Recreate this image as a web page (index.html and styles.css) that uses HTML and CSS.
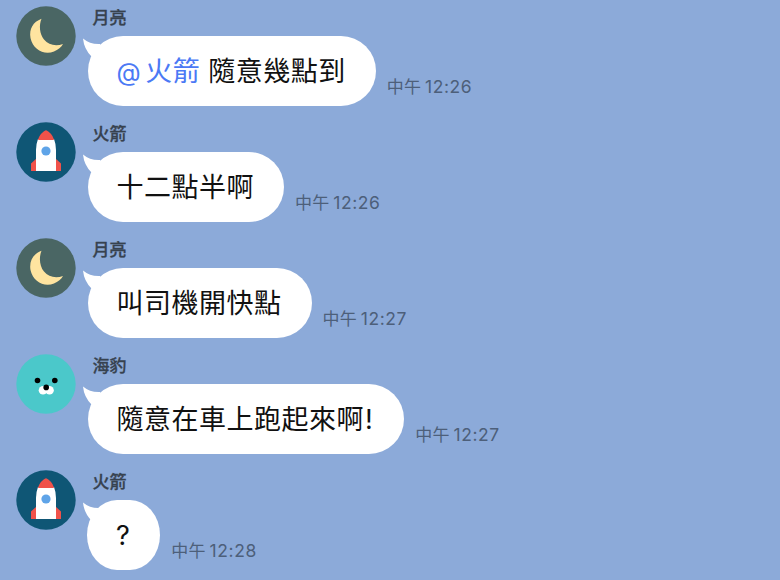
FILE: index.html
```
<!DOCTYPE html>
<html lang="zh-Hant">
<head>
    <meta charset="UTF-8">
    <meta name="viewport" content="width=device-width, initial-scale=1.0">
    <title>聊天</title>
    <link rel="stylesheet" href="styles.css">
</head>
<body>
    <svg class="defs" aria-hidden="true">
        <symbol id="moon" viewBox="0 0 60 60">
            <circle cx="30" cy="30" r="29.7" fill="#4a6664"/>
            <path d="M25.500 12.800C17 16 13 23 14.500 32C17 43.500 28 49.500 38 45.500C42 44 45.500 41 47 38C39.500 40.500 32.500 39 28 33.500C23.500 28 22.800 19.500 25.500 12.800Z" fill="#ffe4a0"/>
        </symbol>
        <symbol id="rocket" viewBox="0 0 60 60">
            <circle cx="30" cy="30" r="29.7" fill="#0f5675"/>
            <path d="M15 49V41.5L21 36H39L45 41.5V49Z" fill="#f0524a"/>
            <path d="M20 49V28Q20 22 22 17H38Q40 22 40 28V49Z" fill="#fff"/>
            <path d="M22 18C23.5 12.5 27 9.5 30 8.3C33 9.5 36.5 12.5 38 18Z" fill="#f0524a"/>
            <circle cx="30" cy="29" r="4.6" fill="#5fa4e8"/>
        </symbol>
        <symbol id="seal" viewBox="0 0 60 60">
            <circle cx="30" cy="30" r="29.7" fill="#4bc8ca"/>
            <circle cx="27" cy="36.3" r="4.3" fill="#fff"/>
            <circle cx="33.5" cy="36.3" r="4.3" fill="#fff"/>
            <circle cx="21.5" cy="26.5" r="2.8"/>
            <circle cx="38.8" cy="26.5" r="2.8"/>
            <circle cx="30.2" cy="33.4" r="2.8"/>
        </symbol>
        <symbol id="tail" viewBox="0 0 24 24">
            <path d="M1 1.5Q8 7.500 18 7L22 22L11 24L9.500 19.500Q2 12 1 1.500Z" fill="#fff"/>
        </symbol>
    </svg>

    <div class="chat">
        <div class="message">
            <svg class="avatar"><use href="#moon"/></svg>
            <div class="content">
                <div class="name">月亮</div>
                <div class="row">
                    <div class="bubble"><svg class="tail"><use href="#tail"/></svg><span class="mention"><span class="at">@</span>火箭</span> 隨意幾點到</div>
                    <div class="time">中午 <span class="clock">12:26</span></div>
                </div>
            </div>
        </div>

        <div class="message">
            <svg class="avatar"><use href="#rocket"/></svg>
            <div class="content">
                <div class="name">火箭</div>
                <div class="row">
                    <div class="bubble"><svg class="tail"><use href="#tail"/></svg>十二點半啊</div>
                    <div class="time">中午 <span class="clock">12:26</span></div>
                </div>
            </div>
        </div>

        <div class="message">
            <svg class="avatar"><use href="#moon"/></svg>
            <div class="content">
                <div class="name">月亮</div>
                <div class="row">
                    <div class="bubble"><svg class="tail"><use href="#tail"/></svg>叫司機開快點</div>
                    <div class="time">中午 <span class="clock">12:27</span></div>
                </div>
            </div>
        </div>

        <div class="message">
            <svg class="avatar"><use href="#seal"/></svg>
            <div class="content">
                <div class="name">海豹</div>
                <div class="row">
                    <div class="bubble"><svg class="tail"><use href="#tail"/></svg>隨意在車上跑起來啊<span class="mark">!</span></div>
                    <div class="time">中午 <span class="clock">12:27</span></div>
                </div>
            </div>
        </div>

        <div class="message">
            <svg class="avatar"><use href="#rocket"/></svg>
            <div class="content">
                <div class="name">火箭</div>
                <div class="row">
                    <div class="bubble short"><svg class="tail"><use href="#tail"/></svg>?</div>
                    <div class="time">中午 <span class="clock">12:28</span></div>
                </div>
            </div>
        </div>
    </div>
</body>
</html>
```

FILE: styles.css
```
body {
    margin: 0;
    background-color: #8caad9;
    font-family: Inter, "Noto Sans CJK TC", sans-serif;
    color: #111;
}
.defs {
    display: none;
}
.chat {
    height: 580px;
    overflow: hidden;
}
.message {
    display: flex;
    height: 116px;
    padding-left: 16px;
    box-sizing: border-box;
}
.avatar {
    width: 60px;
    height: 60px;
    margin-top: 6px;
    flex-shrink: 0;
}
.content {
    padding-left: 12px;
}
.name {
    height: 36px;
    padding-left: 4.5px;
    box-sizing: border-box;
    line-height: 36px;
    font-size: 17px;
    font-weight: 500;
    -webkit-text-stroke: 0.3px #37424f;
    color: #37424f;
}
.row {
    display: flex;
    align-items: flex-end;
}
.bubble {
    position: relative;
    height: 70px;
    padding: 0 30px 0 28.5px;
    box-sizing: border-box;
    border-radius: 35px;
    background-color: #fff;
    font-size: 27px;
    letter-spacing: 0.5px;
    line-height: 72px;
    white-space: nowrap;
}
.bubble.short {
    margin-left: -1px;
    padding-left: 29px;
    border-radius: 30px / 35px;
}
.tail {
    position: absolute;
    left: -6px;
    top: 1px;
    width: 24px;
    height: 24px;
}
.short .tail {
    left: -5px;
}
.mention {
    color: #4b79f5;
}
.at {
    margin-right: 4px;
    font-size: 25px;
}
.mark {
    margin: 0 1px;
}
.time {
    margin-left: 11px;
    padding-bottom: 6px;
    font-size: 17px;
    letter-spacing: 0.3px;
    line-height: 26px;
    color: #4d5f7a;
    white-space: nowrap;
}
.clock {
    margin-left: -1.5px;
    font-size: 17.5px;
    letter-spacing: 0.6px;
}
```
